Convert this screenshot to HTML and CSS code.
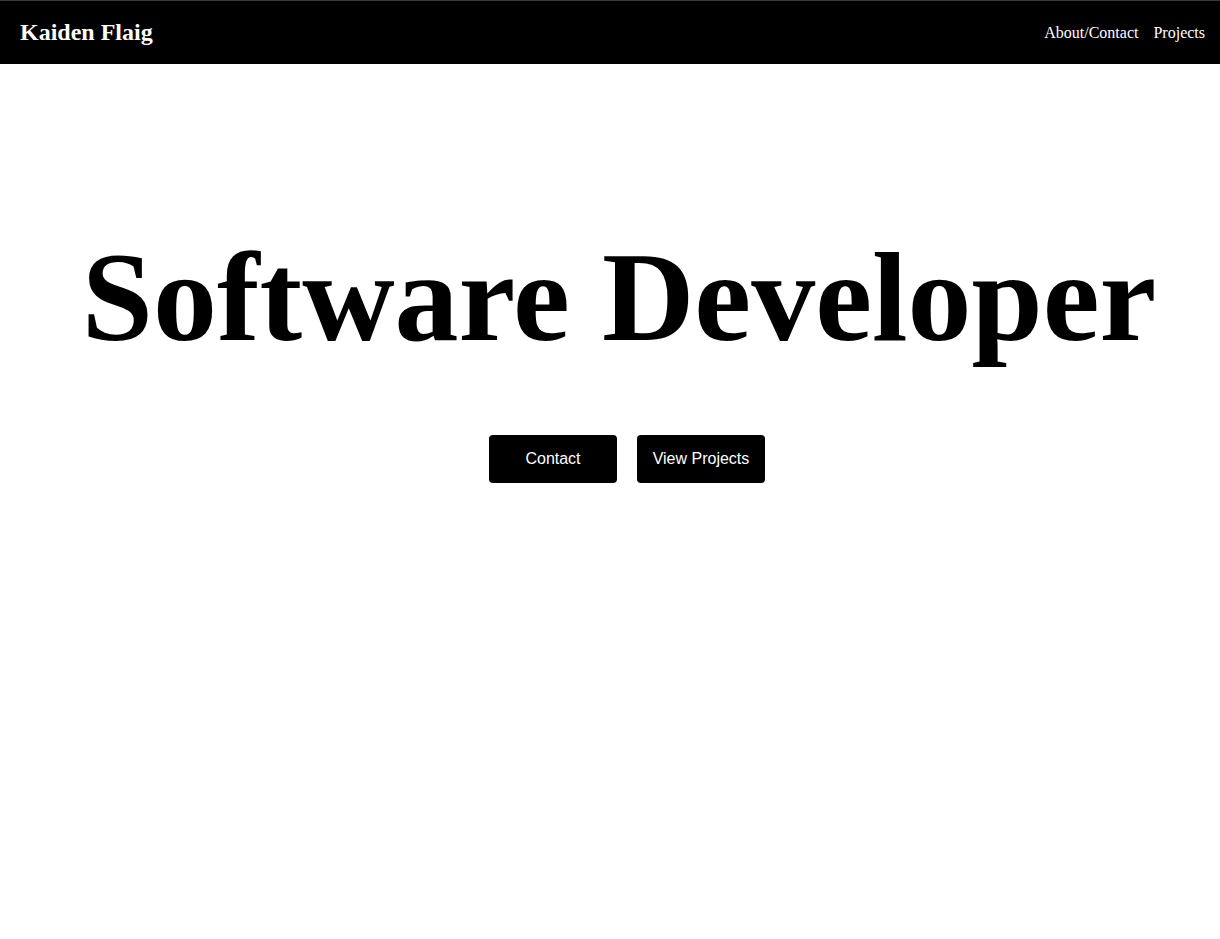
FILE: index.html
```html
<!DOCTYPE html>
<html>
<head>
<meta charset="utf-8">
<title>Kaiden Flaig</title>
<link rel="stylesheet" href="styles.css">
</head>
<body>
<nav class="nav">
  <a class="brand" href="#">Kaiden Flaig</a>
  <div class="links">
    <a href="#">About/Contact</a>
    <a href="#">Projects</a>
  </div>
</nav>
<main class="hero">
  <h1 class="title">Software Developer</h1>
  <div class="actions">
    <a class="btn" href="#">Contact</a>
    <a class="btn" href="#">View Projects</a>
  </div>
</main>
</body>
</html>
```
FILE: styles.css
```css
html, body {
  margin: 0;
  padding: 0;
  background: #fff;
  font-family: "Liberation Serif", "Times New Roman", serif;
}
.nav {
  background: #000;
  border-top: 1px solid #3a3a3a;
  height: 63px;
  display: flex;
  align-items: center;
  justify-content: space-between;
  padding: 0 15px 0 20px;
}
.brand {
  color: #fff;
  text-decoration: none;
  font-weight: bold;
  font-size: 24px;
}
.links {
  display: flex;
  gap: 15px;
}
.links a {
  color: #fff;
  text-decoration: none;
  font-size: 16px;
}
.hero {
  display: flex;
  flex-direction: column;
  align-items: center;
  padding-left: 18px;
}
.title {
  margin: 160px 0 0;
  font-size: 128px;
  font-weight: bold;
  line-height: 1.15;
}
.actions {
  display: flex;
  gap: 20px;
  margin-top: 64px;
  padding-left: 16px;
}
.btn {
  width: 128px;
  height: 48px;
  display: flex;
  align-items: center;
  justify-content: center;
  background: #000;
  color: #fff;
  text-decoration: none;
  border-radius: 4px;
  font-family: "Liberation Sans", Arial, sans-serif;
  font-size: 16px;
}
```
